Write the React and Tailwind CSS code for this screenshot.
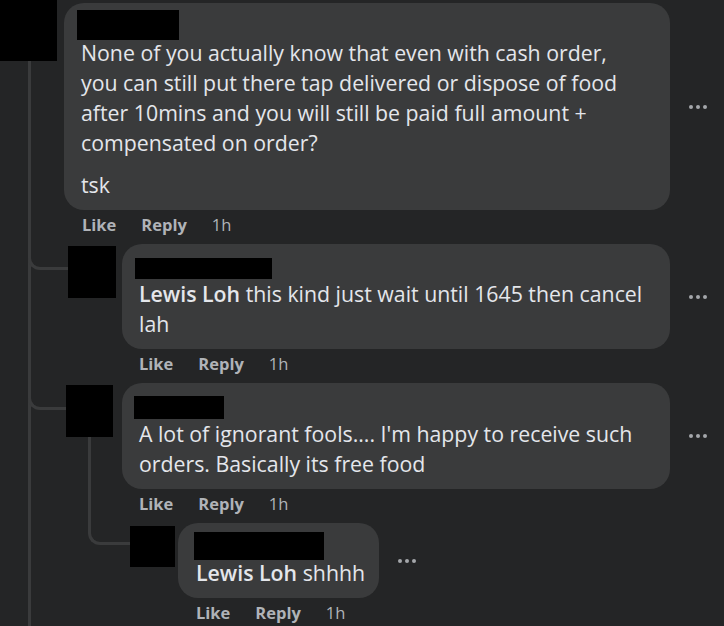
import React from "react";

const font = { fontFamily: '"Open Sans", "Noto Sans", sans-serif' };

function Dots() {
  return (
    <div className="ml-[19px] flex gap-[3px]">
      <span className="block h-[4px] w-[4px] rounded-full bg-[#a4a7ab]" />
      <span className="block h-[4px] w-[4px] rounded-full bg-[#a4a7ab]" />
      <span className="block h-[4px] w-[4px] rounded-full bg-[#a4a7ab]" />
    </div>
  );
}

function Actions({ pl }) {
  return (
    <div className={`flex h-[34px] items-start pt-[3px] text-[16.5px] leading-[24px] font-bold text-[#b0b3b8] ${pl}`}>
      <span>Like</span>
      <span className="ml-[25px]">Reply</span>
      <span className="ml-[25px] font-normal">1h</span>
    </div>
  );
}

export default function App() {
  return (
    <div
      className="relative h-[626px] w-[724px] overflow-hidden bg-[#242526] text-[#e4e6eb]"
      style={font}
    >
      {/* thread lines */}
      <div className="absolute left-[28px] top-[61px] h-[565px] w-[3px] bg-[#3a3b3c]" />
      <div className="absolute left-[28px] top-[240px] h-[30px] w-[40px] rounded-bl-[12px] border-b-[3px] border-l-[3px] border-[#3a3b3c]" />
      <div className="absolute left-[28px] top-[380px] h-[30px] w-[38px] rounded-bl-[12px] border-b-[3px] border-l-[3px] border-[#3a3b3c]" />
      <div className="absolute left-[88px] top-[437px] h-[108px] w-[42px] rounded-bl-[12px] border-b-[3px] border-l-[3px] border-[#3a3b3c]" />

      {/* comment 1 */}
      <div className="relative flex items-start">
        <div className="h-[61px] w-[57px] bg-black" />
        <div className="ml-[7px] mt-[3px] flex flex-col">
          <div className="flex items-center">
            <div className="w-[606px] rounded-[20px] bg-[#3a3b3c] pb-[10px] pl-[17px] pt-[7px] text-[21.3px] leading-[30px]">
              <div className="mb-[-2px] ml-[-4px] h-[30px] w-[102px] bg-black" />
              <div className="whitespace-nowrap">
                None of you actually know that even with cash order,
                <br />
                you can still put there tap delivered or dispose of food
                <br />
                after 10mins and you will still be paid full amount +
                <br />
                compensated on order?
              </div>
              <div className="mt-[12px]">tsk</div>
            </div>
            <Dots />
          </div>
          <Actions pl="pl-[18px]" />
        </div>
      </div>

      {/* comment 2 */}
      <div className="relative flex items-start pl-[68px]">
        <div className="mt-[2px] h-[52px] w-[48px] bg-black" />
        <div className="ml-[6px] flex flex-col">
          <div className="flex items-center">
            <div className="w-[548px] rounded-[20px] bg-[#3a3b3c] pb-[10px] pl-[17px] pt-[14px] text-[21.3px] leading-[30px]">
              <div className="ml-[-4px] h-[21px] w-[137px] bg-black" />
              <div className="whitespace-nowrap">
                <span className="font-semibold">Lewis Loh</span> this kind just wait until 1645 then cancel
                <br />
                lah
              </div>
            </div>
            <Dots />
          </div>
          <Actions pl="pl-[17px]" />
        </div>
      </div>

      {/* comment 3 */}
      <div className="relative flex items-start pl-[66px]">
        <div className="mt-[2px] h-[52px] w-[47px] bg-black" />
        <div className="ml-[9px] flex flex-col">
          <div className="flex items-center">
            <div className="w-[548px] rounded-[20px] bg-[#3a3b3c] pb-[10px] pl-[17px] pt-[13px] text-[21.3px] leading-[30px]">
              <div className="ml-[-5px] h-[23px] w-[90px] bg-black" />
              <div className="whitespace-nowrap">
                A lot of ignorant fools.... I'm happy to receive such
                <br />
                orders. Basically its free food
              </div>
            </div>
            <Dots />
          </div>
          <Actions pl="pl-[17px]" />
        </div>
      </div>

      {/* comment 4 */}
      <div className="relative flex items-start pl-[130px]">
        <div className="mt-[3px] h-[41px] w-[45px] bg-black" />
        <div className="ml-[3px] flex flex-col">
          <div className="flex items-center">
            <div className="rounded-[20px] bg-[#3a3b3c] pb-[10px] pl-[18px] pr-[14px] pt-[9px] text-[21.3px] leading-[30px]">
              <div className="mb-[-2px] ml-[-2px] h-[28px] w-[130px] bg-black" />
              <div className="whitespace-nowrap">
                <span className="font-semibold">Lewis Loh</span> shhhh
              </div>
            </div>
            <Dots />
          </div>
          <Actions pl="pl-[18px]" />
        </div>
      </div>
    </div>
  );
}
